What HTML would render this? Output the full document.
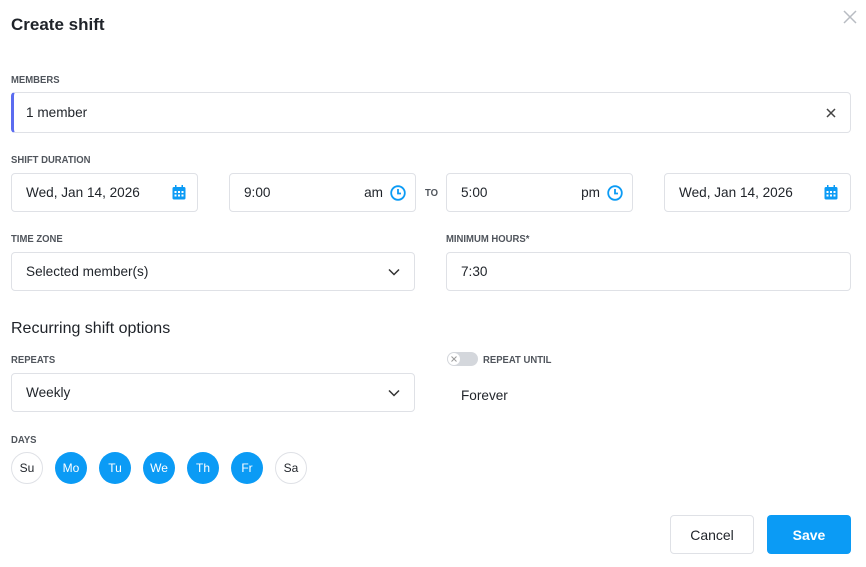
<!DOCTYPE html>
<html><head><meta charset="utf-8"><style>
*{box-sizing:border-box;margin:0;padding:0}
body{width:866px;height:567px;background:#fff;font-family:"Liberation Sans",sans-serif;color:#1f2329;position:relative;overflow:hidden}
.a{position:absolute}
.lbl{position:absolute;font-size:10px;color:#50555c;font-weight:bold;letter-spacing:0;transform:scaleX(0.95);transform-origin:left}
.in{position:absolute;border:1px solid #dfe1e6;border-radius:4px;font-size:13.6px;display:flex;align-items:center;padding-left:14px;background:#fff}
.d{position:absolute;top:452px;width:32px;height:32px;border-radius:50%;font-size:12px;display:flex;align-items:center;justify-content:center}
.on{background:#0b9bf5;color:#fff}
.off{border:1px solid #dfe1e6;color:#1f2329}
.chev{position:absolute;right:14px;top:15px}
</style></head><body>
<div class="a" style="left:11px;top:15px;font-size:17px;font-weight:bold;color:#1f2329">Create shift</div>
<svg class="a" style="left:843px;top:10px" width="14" height="14"><path d="M1 1L13 13M13 1L1 13" stroke="#b8bcc2" stroke-width="1.5"/></svg>

<div class="lbl" style="left:11px;top:75px">MEMBERS</div>
<div class="in" style="left:11px;top:92px;width:840px;height:41px;border-left:3px solid #5b6cf0;padding-left:12px">1 member</div>
<svg class="a" style="left:826px;top:108px" width="10" height="10"><path d="M1 1L9 9M9 1L1 9" stroke="#444" stroke-width="1.5"/></svg>

<div class="lbl" style="left:11px;top:155px">SHIFT DURATION</div>
<div class="in" style="left:11px;top:173px;width:187px;height:39px">Wed, Jan 14, 2026</div>
<svg class="a" style="left:172px;top:185px" width="14" height="15"><rect x="0.5" y="2" width="13" height="12.5" rx="1.5" fill="#0b9bf5"/><rect x="3" y="0" width="1.5" height="3" fill="#0b9bf5"/><rect x="9.5" y="0" width="1.5" height="3" fill="#0b9bf5"/><g fill="#fff"><rect x="2.5" y="6" width="2" height="2"/><rect x="6" y="6" width="2" height="2"/><rect x="9.5" y="6" width="2" height="2"/><rect x="2.5" y="9.5" width="2" height="2"/><rect x="6" y="9.5" width="2" height="2"/><rect x="9.5" y="9.5" width="2" height="2"/></g></svg>
<div class="in" style="left:229px;top:173px;width:187px;height:39px">9:00<span class="a" style="right:32px">am</span></div>
<svg class="a" style="left:390px;top:185px" width="16" height="16"><circle cx="8" cy="8" r="6.8" fill="none" stroke="#0b9bf5" stroke-width="1.8"/><path d="M8 4V8.5H11" fill="none" stroke="#0b9bf5" stroke-width="1.8"/></svg>
<div class="lbl" style="left:425px;top:188px">TO</div>
<div class="in" style="left:446px;top:173px;width:187px;height:39px">5:00<span class="a" style="right:32px">pm</span></div>
<svg class="a" style="left:607px;top:185px" width="16" height="16"><circle cx="8" cy="8" r="6.8" fill="none" stroke="#0b9bf5" stroke-width="1.8"/><path d="M8 4V8.5H11" fill="none" stroke="#0b9bf5" stroke-width="1.8"/></svg>
<div class="in" style="left:664px;top:173px;width:187px;height:39px">Wed, Jan 14, 2026</div>
<svg class="a" style="left:824px;top:185px" width="14" height="15"><rect x="0.5" y="2" width="13" height="12.5" rx="1.5" fill="#0b9bf5"/><rect x="3" y="0" width="1.5" height="3" fill="#0b9bf5"/><rect x="9.5" y="0" width="1.5" height="3" fill="#0b9bf5"/><g fill="#fff"><rect x="2.5" y="6" width="2" height="2"/><rect x="6" y="6" width="2" height="2"/><rect x="9.5" y="6" width="2" height="2"/><rect x="2.5" y="9.5" width="2" height="2"/><rect x="6" y="9.5" width="2" height="2"/><rect x="9.5" y="9.5" width="2" height="2"/></g></svg>

<div class="lbl" style="left:11px;top:234px">TIME ZONE</div>
<div class="lbl" style="left:446px;top:234px">MINIMUM HOURS*</div>
<div class="in" style="left:11px;top:252px;width:404px;height:39px">Selected member(s)<svg class="chev" width="12" height="8"><path d="M1 1.5L6 6.5L11 1.5" fill="none" stroke="#333" stroke-width="1.5"/></svg></div>
<div class="in" style="left:446px;top:252px;width:405px;height:39px">7:30</div>

<div class="a" style="left:11px;top:320px;font-size:16px;color:#1f2329">Recurring shift options</div>
<div class="lbl" style="left:11px;top:355px">REPEATS</div>
<div class="a" style="left:447px;top:352px;width:31px;height:14px;border-radius:7px;background:#d4d7dc"></div>
<div class="a" style="left:448px;top:353px;width:12px;height:12px;border-radius:50%;background:#fff"></div>
<svg class="a" style="left:451px;top:356px" width="6" height="6"><path d="M.5 .5L5.5 5.5M5.5 .5L.5 5.5" stroke="#999" stroke-width="1"/></svg>
<div class="lbl" style="left:483px;top:355px">REPEAT UNTIL</div>
<div class="in" style="left:11px;top:373px;width:404px;height:39px">Weekly<svg class="chev" width="12" height="8"><path d="M1 1.5L6 6.5L11 1.5" fill="none" stroke="#333" stroke-width="1.5"/></svg></div>
<div class="a" style="left:461px;top:388px;font-size:13.6px">Forever</div>

<div class="lbl" style="left:11px;top:435px">DAYS</div>
<div class="d off" style="left:11px">Su</div>
<div class="d on" style="left:55px">Mo</div>
<div class="d on" style="left:99px">Tu</div>
<div class="d on" style="left:143px">We</div>
<div class="d on" style="left:187px">Th</div>
<div class="d on" style="left:231px">Fr</div>
<div class="d off" style="left:275px">Sa</div>

<div class="a" style="left:670px;top:515px;width:84px;height:39px;border:1px solid #dfe1e6;border-radius:4px;font-size:14px;display:flex;align-items:center;justify-content:center">Cancel</div>
<div class="a" style="left:767px;top:515px;width:84px;height:39px;background:#0b9bf5;border-radius:4px;color:#fff;font-size:14px;font-weight:bold;display:flex;align-items:center;justify-content:center">Save</div>
</body></html>
